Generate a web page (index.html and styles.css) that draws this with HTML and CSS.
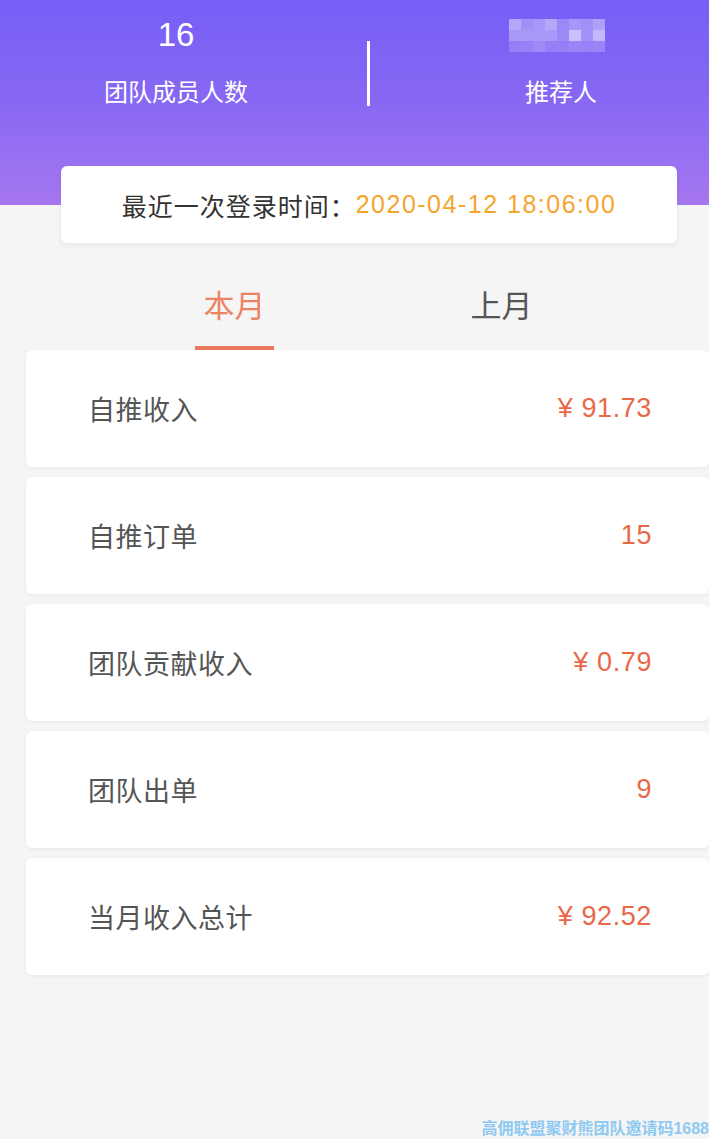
FILE: index.html
```html
<!doctype html>
<html lang="zh-CN">
  <head>
    <meta charset="UTF-8" />
    <meta name="viewport" content="width=device-width, initial-scale=1.0" />
    <title>我的团队</title>
    <link rel="stylesheet" href="styles.css">
  </head>
  <body>
    <div class="header">
      <div class="stat">
        <div class="stat-num">16</div>
        <div class="stat-label">团队成员人数</div>
      </div>
      <div class="divider"></div>
      <div class="stat stat-right">
        <div class="stat-num">
          <!-- pixelated (hidden) name -->
          <div class="mosaic">
            <i style="opacity:.45"></i><i style="opacity:.3"></i><i style="opacity:.35"></i><i style="opacity:.45"></i><i style="opacity:.25"></i><i style="opacity:.35"></i><i style="opacity:.3"></i><i style="opacity:.4"></i>
            <i style="opacity:.35"></i><i style="opacity:.35"></i><i style="opacity:.35"></i><i style="opacity:.35"></i><i style="opacity:.25"></i><i style="opacity:.6"></i><i style="opacity:.3"></i><i style="opacity:.55"></i>
            <i style="opacity:.18"></i><i style="opacity:.2"></i><i style="opacity:.25"></i><i style="opacity:.18"></i><i style="opacity:.18"></i><i style="opacity:.22"></i><i style="opacity:.2"></i><i style="opacity:.22"></i>
          </div>
        </div>
        <div class="stat-label">推荐人</div>
      </div>
    </div>

    <div class="login-card">
      <span class="login-label">最近一次登录时间：</span><span class="login-time">2020-04-12 18:06:00</span>
    </div>

    <div class="tabs">
      <div class="tab active">本月</div>
      <div class="tab">上月</div>
    </div>

    <div class="list">
      <div class="row"><span class="row-label">自推收入</span><span class="row-value">¥ 91.73</span></div>
      <div class="row"><span class="row-label">自推订单</span><span class="row-value">15</span></div>
      <div class="row"><span class="row-label">团队贡献收入</span><span class="row-value">¥ 0.79</span></div>
      <div class="row"><span class="row-label">团队出单</span><span class="row-value">9</span></div>
      <div class="row"><span class="row-label">当月收入总计</span><span class="row-value">¥ 92.52</span></div>
    </div>

    <div class="watermark">高佣联盟聚财熊团队邀请码1688</div>
  </body>
</html>
```

FILE: styles.css
```css
html {
  background: #f5f5f5;
}
body {
  margin: 0;
  min-height: 1139px;
  position: relative;
  font-family: "Liberation Sans", "Noto Sans CJK SC", sans-serif;
  color: #333;
}
.header {
  height: 205px;
  background: linear-gradient(180deg, #765ef6 0%, #8868f3 50%, #a577ef 100%);
  display: flex;
  align-items: flex-start;
  color: #fff;
}
.stat {
  width: 352px;
  text-align: center;
  padding-top: 14px;
}
.stat-right {
  width: auto;
  flex: 1;
  padding-left: 43px;
}
.stat-num {
  font-size: 33px;
  line-height: 42px;
  height: 42px;
  display: flex;
  justify-content: center;
  align-items: center;
}
.stat-label {
  font-size: 24px;
  line-height: 34px;
  margin-top: 20px;
}
.divider {
  width: 3px;
  height: 65px;
  background: #fff;
  margin: 41px 0 0 15px;
}
.mosaic {
  width: 96px;
  height: 33px;
  display: grid;
  grid-template-columns: repeat(8, 1fr);
  margin: 0 0 0 -8px;
}
.mosaic i {
  display: block;
  background: #fff;
}
.login-card {
  width: 616px;
  height: 77px;
  margin: -39px 0 0 61px;
  background: #fff;
  border-radius: 6px;
  box-shadow: 0 2px 6px rgba(0, 0, 0, 0.06);
  display: flex;
  align-items: center;
  justify-content: center;
  font-size: 25px;
  color: #333;
  position: relative;
}
.login-label {
  letter-spacing: 1px;
}
.login-time {
  color: #f5a52c;
  letter-spacing: 1.5px;
}
.tabs {
  display: flex;
  gap: 188px;
  padding-left: 195px;
  height: 107px;
  box-sizing: border-box;
  padding-top: 44px;
}
.tab {
  width: 79px;
  text-align: center;
  font-size: 31px;
  line-height: 40px;
  color: #555;
}
.tab.active {
  color: #ee8264;
  border-bottom: 4px solid #ea7a60;
  height: 63px;
  box-sizing: border-box;
}
.list {
  display: flex;
  flex-direction: column;
  gap: 10px;
  margin-left: 26px;
}
.row {
  height: 117px;
  background: #fff;
  border-radius: 6px;
  box-shadow: 0 1px 4px rgba(0, 0, 0, 0.06);
  display: flex;
  align-items: center;
  justify-content: space-between;
  padding: 0 57px 0 62px;
}
.row-label {
  font-size: 27px;
  letter-spacing: 0.5px;
  color: #555;
}
.row-value {
  font-size: 27px;
  letter-spacing: 0.6px;
  color: #e8694a;
}
.watermark {
  position: absolute;
  right: 0;
  bottom: 0;
  font-size: 16px;
  font-weight: bold;
  line-height: 20px;
  color: #8fc9f2;
}
```
